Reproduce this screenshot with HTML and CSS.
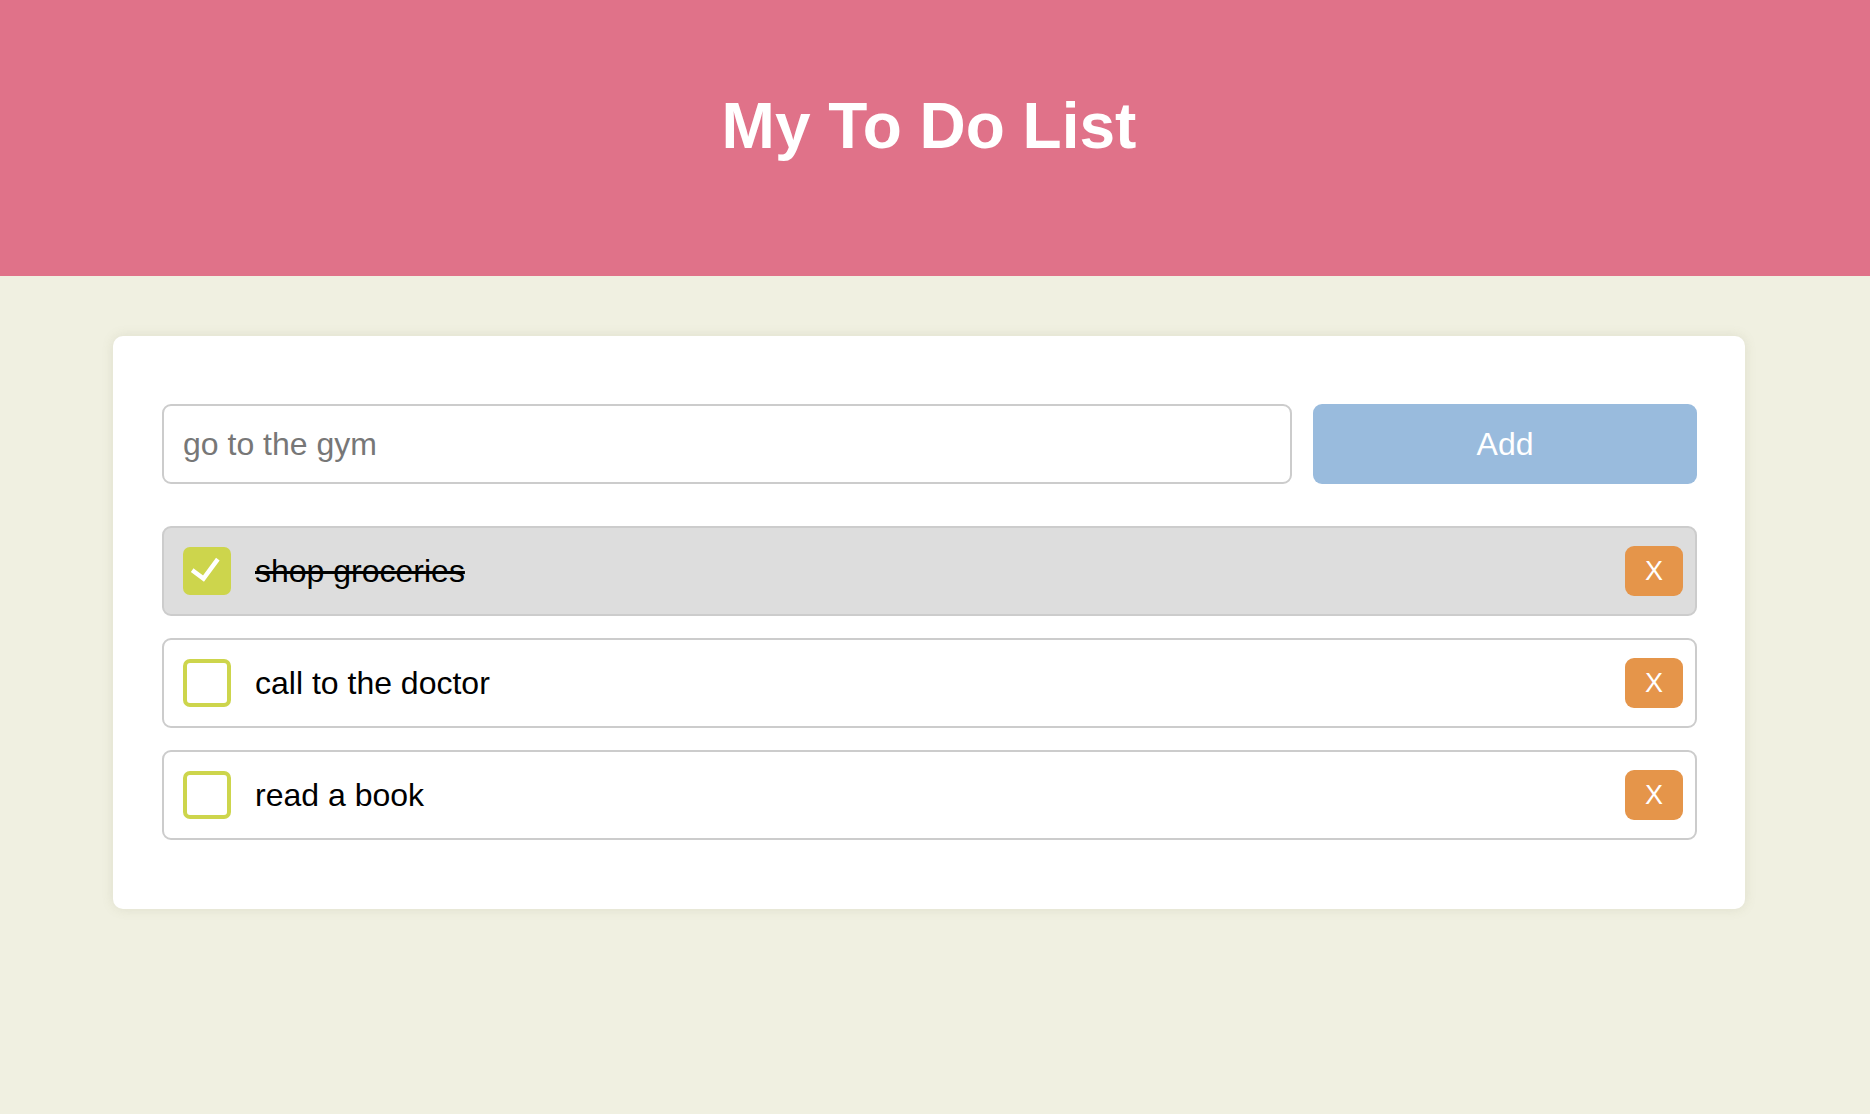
FILE: index.html
```html
<!DOCTYPE html>
<html lang="en">
<head>
<meta charset="utf-8">
<title>My To Do List</title>
<link rel="stylesheet" href="styles.css">
</head>
<body>
<header class="header">
  <h1 class="title">My To Do List</h1>
</header>
<main class="page">
  <section class="card">
    <form class="add-form">
      <input class="add-input" type="text" placeholder="go to the gym">
      <button class="add-btn" type="button">Add</button>
    </form>
    <ul class="list">
      <li class="item done">
        <span class="check checked">
          <svg width="48" height="48" viewBox="0 0 48 48"><path d="M11 24.5 L20.5 31.5 L33.5 14" fill="none" stroke="#fff" stroke-width="4.5" stroke-linecap="square" stroke-linejoin="miter"/></svg>
        </span>
        <span class="label">shop groceries</span>
        <button class="del" type="button">X</button>
      </li>
      <li class="item">
        <span class="check"></span>
        <span class="label">call to the doctor</span>
        <button class="del" type="button">X</button>
      </li>
      <li class="item">
        <span class="check"></span>
        <span class="label">read a book</span>
        <button class="del" type="button">X</button>
      </li>
    </ul>
  </section>
</main>
</body>
</html>
```

FILE: styles.css
```css
* { box-sizing: border-box; }

html, body {
  margin: 0;
  padding: 0;
  background: #f0f0e1;
  font-family: "Liberation Sans", Arial, sans-serif;
}

body { min-height: 1114px; }

.header {
  background: #e07289;
  padding: 90px 12px 114px 0;
}

.title {
  margin: 0;
  text-align: center;
  color: #ffffff;
  font-size: 64px;
  line-height: 72px;
  font-weight: bold;
}

.page {
  padding: 60px 125px 60px 113px;
}

.card {
  background: #ffffff;
  border-radius: 10px;
  box-shadow: 0 0 12px rgba(120, 120, 80, 0.15);
  padding: 68px 48px 69px 49px;
}

.add-form {
  display: grid;
  grid-template-columns: 1fr 384px;
  gap: 21px;
  margin: 0 0 42px;
}

.add-input {
  height: 80px;
  border: 2px solid #cccccc;
  border-radius: 9px;
  padding: 0 19px;
  font-family: "Liberation Sans", Arial, sans-serif;
  font-size: 32px;
  color: #333;
  outline: none;
}

.add-input::placeholder { color: #777777; }

.add-btn {
  height: 80px;
  border: none;
  border-radius: 9px;
  background: #99bbdd;
  color: #ffffff;
  font-family: "Liberation Sans", Arial, sans-serif;
  font-size: 32px;
}

.list {
  list-style: none;
  margin: 0;
  padding: 0;
  display: flex;
  flex-direction: column;
  gap: 22px;
}

.item {
  display: flex;
  align-items: center;
  height: 90px;
  padding: 0 12px 0 19px;
  border: 2px solid #cccccc;
  border-radius: 9px;
  background: #ffffff;
}

.item.done { background: #dddddd; }

.check {
  flex: none;
  width: 48px;
  height: 48px;
  border: 4px solid #cdd54c;
  border-radius: 7px;
  display: block;
}

.check.checked {
  background: #cdd54c;
  border: none;
}

.check svg { display: block; }

.label {
  flex: 1;
  margin-left: 24px;
  font-size: 32px;
  color: #000000;
}

.done .label { text-decoration: line-through; }

.del {
  flex: none;
  width: 58px;
  height: 50px;
  border: none;
  border-radius: 9px;
  background: #e5954a;
  color: #ffffff;
  font-family: "Liberation Sans", Arial, sans-serif;
  font-size: 27px;
  padding: 0;
}
```
